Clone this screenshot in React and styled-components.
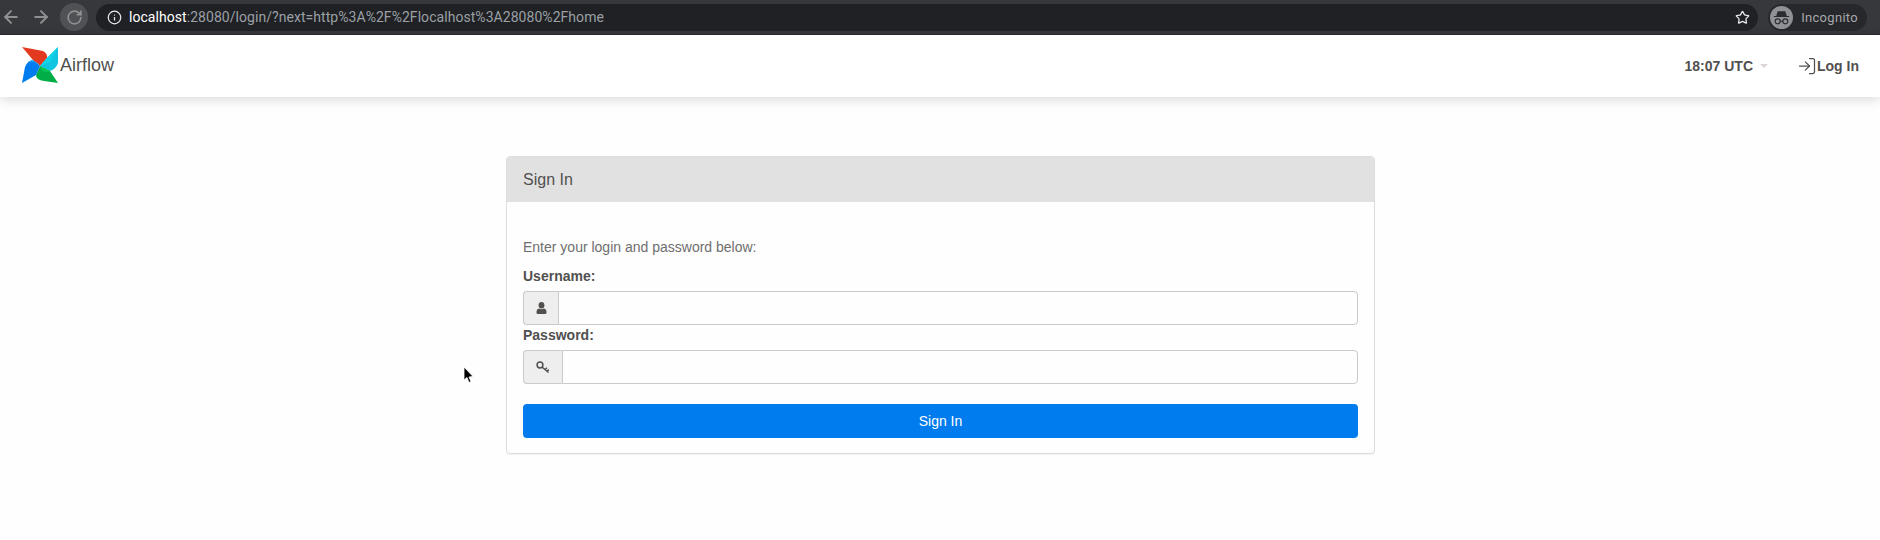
import styled, { createGlobalStyle } from "styled-components";
import { ArrowLeft, ArrowRight, RotateCw, Info, Star, LogIn } from "lucide-react";

const GlobalStyle = createGlobalStyle`
    html, body {
        margin: 0;
        padding: 0;
        background: #fefefe;
    }
    body {
        font-family: "Liberation Sans", Arial, sans-serif;
        color: #51504f;
    }
`
const Page = styled.div`
    position: relative;
    width: 1880px;
    height: 540px;
    overflow: hidden;
`
// browser chrome
const BrowserBar = styled.div`
    display: flex;
    align-items: center;
    height: 35px;
    background: #37383b;
    border-bottom: 1px solid #2a2b2d;
    box-sizing: border-box;
    padding: 0 13px 0 0;
`
const NavButton = styled.div`
    display: flex;
    align-items: center;
    justify-content: center;
    flex: none;
    width: ${props => props.$round ? "28px" : "22px"};
    height: 28px;
    border-radius: 50%;
    color: #8f9092;
    background: ${props => props.$round ? "#505154" : "transparent"};
`
const NavButtons = styled.div`
    display: flex;
    align-items: center;
    gap: 8px;
`
const UrlPill = styled.div`
    display: flex;
    align-items: center;
    flex: 1;
    height: 27px;
    margin-left: 8px;
    padding: 0 8px 0 11px;
    border-radius: 14px;
    background: #202124;
    color: #e8eaed;
`
const UrlText = styled.div`
    margin-left: 7px;
    flex: 1;
    font-family: Roboto, sans-serif;
    font-size: 14px;
    color: #9aa0a6;
    letter-spacing: 0.05px;
    & b {
        font-weight: 400;
        color: #ffffff;
    }
`
const IncognitoPill = styled.div`
    display: flex;
    align-items: center;
    gap: 8px;
    height: 27px;
    margin-left: 10px;
    padding: 0 9px 0 2px;
    border-radius: 14px;
    background: #27282b;
    font-family: Roboto, sans-serif;
    font-size: 13px;
    letter-spacing: 0.3px;
    color: #a5a7aa;
`
// airflow navbar
const Navbar = styled.div`
    display: flex;
    align-items: center;
    justify-content: space-between;
    height: 62px;
    box-sizing: border-box;
    padding: 0 21px 0 22px;
    background: #ffffff;
    box-shadow: 0 2px 12px rgba(0, 0, 0, 0.16);
`
const Brand = styled.div`
    display: flex;
    align-items: center;
    gap: 2px;
    font-size: 18px;
    color: #51504f;
    margin-top: -2px;
`
const NavRight = styled.div`
    display: flex;
    align-items: center;
    font-size: 14px;
    font-weight: bold;
    color: #51504f;
`
const Clock = styled.div`
    display: flex;
    align-items: center;
    gap: 7px;
    margin-right: 29px;
    &::after {
        content: "";
        border-top: 4px solid #ddd6d8;
        border-left: 4px solid transparent;
        border-right: 4px solid transparent;
    }
`
const LoginLink = styled.div`
    display: flex;
    align-items: center;
    gap: 0;
`
// sign in card
const Content = styled.div`
    display: flex;
    justify-content: center;
    padding-top: 59px;
    padding-left: 1px;
`
const Panel = styled.div`
    width: 869px;
    box-sizing: border-box;
    border: 1px solid #dcdde0;
    border-radius: 4px;
    background: #fefefe;
    box-shadow: 0 1px 1px rgba(0, 0, 0, 0.05);
`
const PanelHeading = styled.div`
    display: flex;
    align-items: center;
    height: 45px;
    box-sizing: border-box;
    padding: 0 16px;
    background: #e2e1e2;
    border-radius: 3px 3px 0 0;
    font-size: 16px;
    color: #51504f;
`
const PanelBody = styled.div`
    display: flex;
    flex-direction: column;
    padding: 35px 16px 15px;
`
const Hint = styled.p`
    margin: 0;
    font-size: 14px;
    line-height: 20px;
    color: #6f6e6e;
`
const FieldLabel = styled.label`
    font-size: 14px;
    font-weight: bold;
    line-height: 20px;
    margin-top: ${props => props.$top}px;
    color: #51504f;
`
const InputGroup = styled.div`
    display: flex;
    height: 34px;
    margin-top: 5px;
`
const Addon = styled.div`
    display: flex;
    align-items: center;
    justify-content: center;
    flex: none;
    width: ${props => props.$width}px;
    box-sizing: border-box;
    background: #eeeeee;
    border: 1px solid #ccc9ca;
    border-right: none;
    border-radius: 4px 0 0 4px;
    color: #51504f;
`
const Field = styled.input`
    flex: 1;
    min-width: 0;
    box-sizing: border-box;
    border: 1px solid #ccc9ca;
    border-radius: 0 4px 4px 0;
    background: #fefefe;
    outline: none;
`
const SubmitButton = styled.button`
    height: 34px;
    margin-top: 20px;
    border: none;
    border-radius: 4px;
    background: #017cee;
    color: #ffffff;
    font-family: inherit;
    font-size: 14px;
`
const Cursor = styled.svg`
    position: absolute;
    left: 463px;
    top: 366px;
`

const Pinwheel = () => (
    <svg width="36" height="36" viewBox="0 0 36 36">
        <path d="M0 0 L21 4 Q26 7 25 11 L18 19 L11 13 Z" fill="#e43921" />
        <path d="M36 0 L36 16 Q34 22 28 24 L18 19 L25 11 Z" fill="#11c5e0" />
        <path d="M18 19 L25 11 L36 0 L28 15 Z" fill="#0fd4e8" />
        <path d="M36 36 L22 34 Q14 33 14 28 L18 19 L28 24 Z" fill="#00ad46" />
        <path d="M18 19 L28 24 Q20 27 18 19 Z" fill="#04c755" />
        <path d="M0 36 L3 20 Q6 13 11 13 L18 19 L14 28 Z" fill="#017cee" />
        <path d="M18 19 L11 13 Q9 13 7 15 Q15 13 18 19 Z" fill="#29b6f6" />
    </svg>
)

const UserIcon = () => (
    <svg width="11" height="12" viewBox="0 0 11 12" fill="currentColor">
        <ellipse cx="5.5" cy="3.2" rx="2.9" ry="3.2" />
        <path d="M0.5 11 Q0.2 7.2 3 6.6 Q5.5 8 8 6.6 Q10.8 7.2 10.5 11 Q10.4 12 9 12 L2 12 Q0.6 12 0.5 11 Z" />
    </svg>
)

const KeyIcon = () => (
    <svg width="14" height="13" viewBox="0 0 14 13" fill="none" stroke="currentColor" strokeWidth="1.5">
        <circle cx="4" cy="4" r="2.9" />
        <path d="M6 6 L12.5 11.5 M9 8.5 L11 6.8 M11 10.2 L12.8 8.6" />
    </svg>
)

const IncognitoIcon = () => (
    <svg width="23" height="23" viewBox="0 0 24 24">
        <circle cx="12" cy="12" r="12" fill="#8f9194" />
        <path d="M8 5.5 H16 L17.5 10.5 H20 V11.5 H4 V10.5 H6.5 Z" fill="#2c2d30" />
        <circle cx="8" cy="16" r="2.6" fill="none" stroke="#2c2d30" strokeWidth="1.2" />
        <circle cx="16" cy="16" r="2.6" fill="none" stroke="#2c2d30" strokeWidth="1.2" />
        <path d="M10.6 16 H13.4" stroke="#2c2d30" strokeWidth="1.2" />
    </svg>
)

const App = () => {
    return (
        <Page>
            <GlobalStyle />
            <BrowserBar>
                <NavButtons>
                    <NavButton><ArrowLeft size={20} strokeWidth={2.4} /></NavButton>
                    <NavButton><ArrowRight size={20} strokeWidth={2.4} /></NavButton>
                    <NavButton $round><RotateCw size={17} strokeWidth={2.4} /></NavButton>
                </NavButtons>
                <UrlPill>
                    <Info size={15} />
                    <UrlText><b>localhost</b>:28080/login/?next=http%3A%2F%2Flocalhost%3A28080%2Fhome</UrlText>
                    <Star size={15} />
                </UrlPill>
                <IncognitoPill>
                    <IncognitoIcon />
                    Incognito
                </IncognitoPill>
            </BrowserBar>
            <Navbar>
                <Brand>
                    <Pinwheel />
                    Airflow
                </Brand>
                <NavRight>
                    <Clock>18:07 UTC</Clock>
                    <LoginLink><LogIn size={20} strokeWidth={1.5} />Log In</LoginLink>
                </NavRight>
            </Navbar>
            <Content>
                <Panel>
                    <PanelHeading>Sign In</PanelHeading>
                    <PanelBody>
                        <Hint>Enter your login and password below:</Hint>
                        <FieldLabel $top={9}>Username:</FieldLabel>
                        <InputGroup>
                            <Addon $width={35}><UserIcon /></Addon>
                            <Field type="text" />
                        </InputGroup>
                        <FieldLabel $top={0}>Password:</FieldLabel>
                        <InputGroup>
                            <Addon $width={39}><KeyIcon /></Addon>
                            <Field type="password" />
                        </InputGroup>
                        <SubmitButton>Sign In</SubmitButton>
                    </PanelBody>
                </Panel>
            </Content>
            <Cursor width="11" height="18" viewBox="0 0 11 18">
                <path d="M1 1 L1 14 L4 11.5 L6 16.5 L8 15.5 L6 11 L10 10.5 Z" fill="#000" stroke="#fff" strokeWidth="0.8" />
            </Cursor>
        </Page>
    )
}

export default App
